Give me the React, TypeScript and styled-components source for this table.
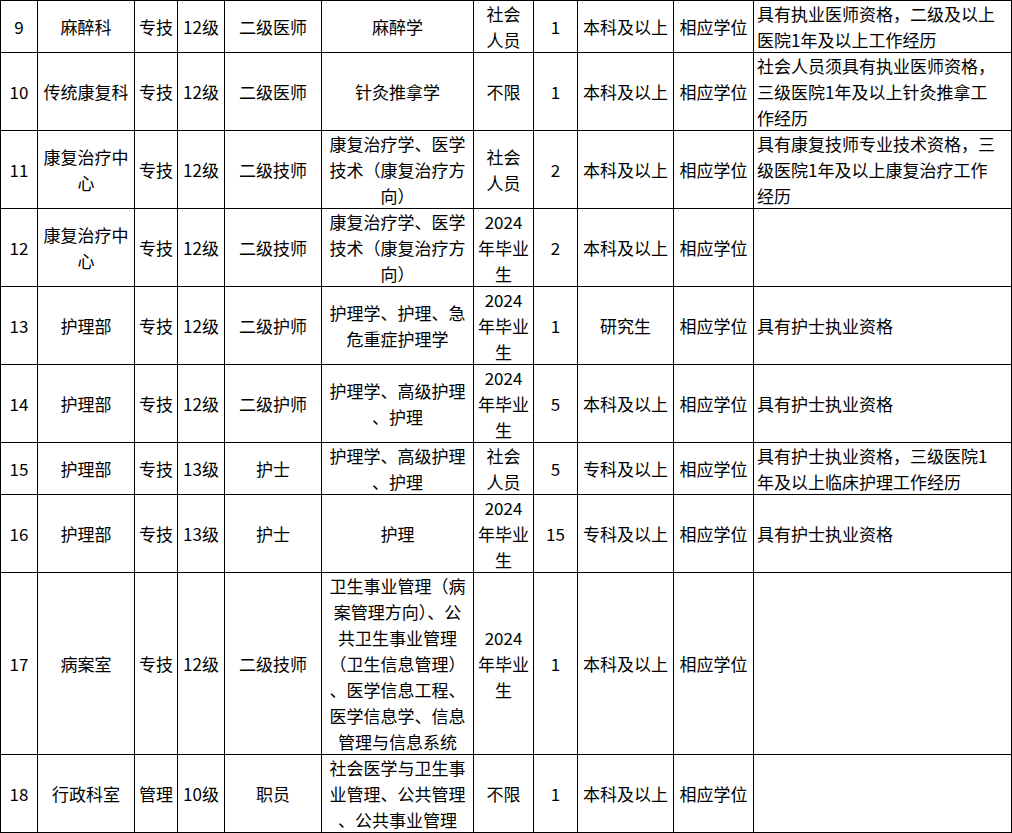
import React from "react";
import styled, { createGlobalStyle } from "styled-components";

const Global = createGlobalStyle`
  html, body { margin: 0; padding: 0; background: #fff; }
  body { font-family: "Noto Sans CJK SC", "Noto Sans", sans-serif; color: #000; }
`;

const Grid = styled.div`
  display: grid;
  grid-template-columns: 36px 96px 42px 46px 96px 151px 59px 43px 95px 79px 257px;
  grid-template-rows: 51px 77px 77px 77px 77px 77px 51px 77px 181px 77px;
  gap: 1px;
  padding: 1px;
  width: 1012px;
  box-sizing: border-box;
  background: #000;
`;

const Row = styled.div`
  display: contents;
`;

const Cell = styled.div<{ $left?: boolean }>`
  background: #fff;
  display: flex;
  flex-direction: column;
  justify-content: center;
  align-items: ${(p) => (p.$left ? "flex-start" : "center")};
  text-align: ${(p) => (p.$left ? "left" : "center")};
  padding: 0 ${(p) => (p.$left ? "3px" : "0")};
  font-size: 17px;
  line-height: 26px;
  white-space: nowrap;
  overflow: visible;
`;

const Line = styled.span`
  display: block;
`;

type R = {
  no: string;
  dept: string[];
  kind: string;
  level: string;
  post: string;
  major: string[];
  src: string[];
  num: string;
  edu: string;
  deg: string;
  req: string[];
};

const rows: R[] = [
  { no: "9", dept: ["麻醉科"], kind: "专技", level: "12级", post: "二级医师", major: ["麻醉学"], src: ["社会", "人员"], num: "1", edu: "本科及以上", deg: "相应学位", req: ["具有执业医师资格，二级及以上", "医院1年及以上工作经历"] },
  { no: "10", dept: ["传统康复科"], kind: "专技", level: "12级", post: "二级医师", major: ["针灸推拿学"], src: ["不限"], num: "1", edu: "本科及以上", deg: "相应学位", req: ["社会人员须具有执业医师资格，", "三级医院1年及以上针灸推拿工", "作经历"] },
  { no: "11", dept: ["康复治疗中", "心"], kind: "专技", level: "12级", post: "二级技师", major: ["康复治疗学、医学", "技术（康复治疗方", "向）"], src: ["社会", "人员"], num: "2", edu: "本科及以上", deg: "相应学位", req: ["具有康复技师专业技术资格，三", "级医院1年及以上康复治疗工作", "经历"] },
  { no: "12", dept: ["康复治疗中", "心"], kind: "专技", level: "12级", post: "二级技师", major: ["康复治疗学、医学", "技术（康复治疗方", "向）"], src: ["2024", "年毕业", "生"], num: "2", edu: "本科及以上", deg: "相应学位", req: [] },
  { no: "13", dept: ["护理部"], kind: "专技", level: "12级", post: "二级护师", major: ["护理学、护理、急", "危重症护理学"], src: ["2024", "年毕业", "生"], num: "1", edu: "研究生", deg: "相应学位", req: ["具有护士执业资格"] },
  { no: "14", dept: ["护理部"], kind: "专技", level: "12级", post: "二级护师", major: ["护理学、高级护理", "、护理"], src: ["2024", "年毕业", "生"], num: "5", edu: "本科及以上", deg: "相应学位", req: ["具有护士执业资格"] },
  { no: "15", dept: ["护理部"], kind: "专技", level: "13级", post: "护士", major: ["护理学、高级护理", "、护理"], src: ["社会", "人员"], num: "5", edu: "专科及以上", deg: "相应学位", req: ["具有护士执业资格，三级医院1", "年及以上临床护理工作经历"] },
  { no: "16", dept: ["护理部"], kind: "专技", level: "13级", post: "护士", major: ["护理"], src: ["2024", "年毕业", "生"], num: "15", edu: "专科及以上", deg: "相应学位", req: ["具有护士执业资格"] },
  { no: "17", dept: ["病案室"], kind: "专技", level: "12级", post: "二级技师", major: ["卫生事业管理（病", "案管理方向）、公", "共卫生事业管理", "（卫生信息管理）", "、医学信息工程、", "医学信息学、信息", "管理与信息系统"], src: ["2024", "年毕业", "生"], num: "1", edu: "本科及以上", deg: "相应学位", req: [] },
  { no: "18", dept: ["行政科室"], kind: "管理", level: "10级", post: "职员", major: ["社会医学与卫生事", "业管理、公共管理", "、公共事业管理"], src: ["不限"], num: "1", edu: "本科及以上", deg: "相应学位", req: [] },
];

const Lines: React.FC<{ items: string[] }> = ({ items }) => (
  <>
    {items.map((t, i) => (
      <Line key={i}>{t}</Line>
    ))}
  </>
);

export default function App() {
  return (
    <>
      <Global />
      <Grid>
        {rows.map((r) => (
          <Row key={r.no}>
            <Cell>{r.no}</Cell>
            <Cell><Lines items={r.dept} /></Cell>
            <Cell>{r.kind}</Cell>
            <Cell>{r.level}</Cell>
            <Cell>{r.post}</Cell>
            <Cell><Lines items={r.major} /></Cell>
            <Cell><Lines items={r.src} /></Cell>
            <Cell>{r.num}</Cell>
            <Cell>{r.edu}</Cell>
            <Cell>{r.deg}</Cell>
            <Cell $left><Lines items={r.req} /></Cell>
          </Row>
        ))}
      </Grid>
    </>
  );
}
